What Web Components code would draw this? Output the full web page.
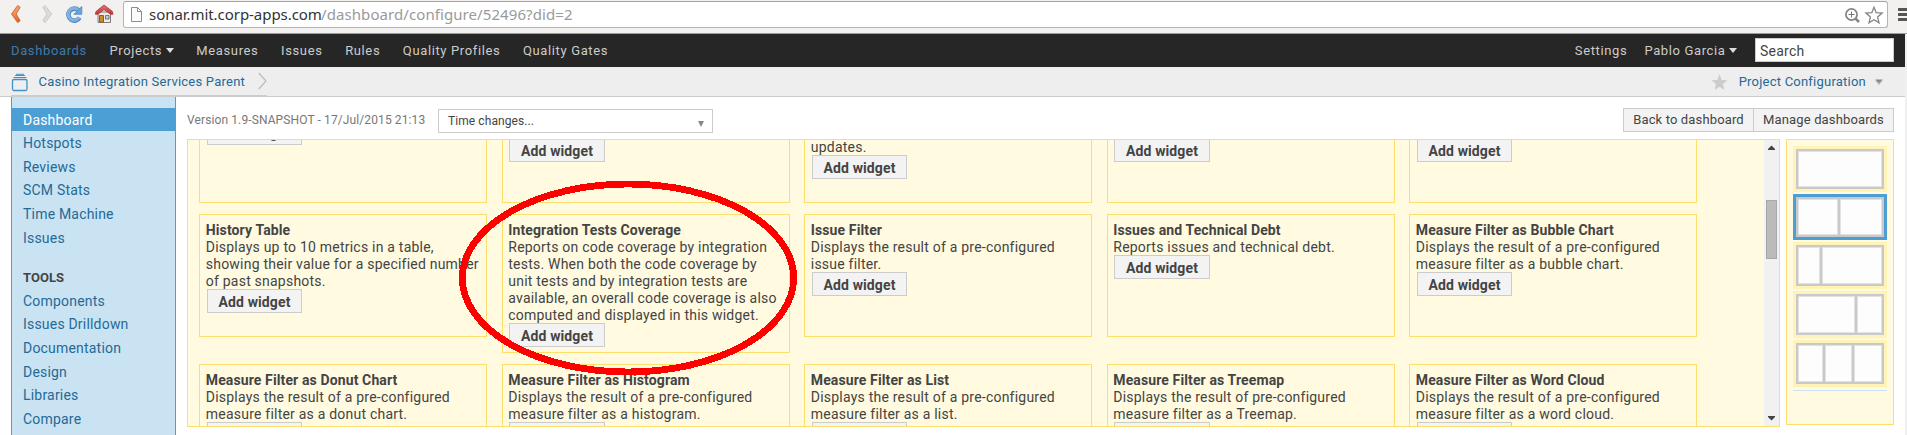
<!DOCTYPE html>
<html lang="en">
<head>
<meta charset="utf-8">
<title>Dashboard configuration</title>
<style>
html,body{margin:0;height:435px;overflow:hidden;background:#fff}
body{font-family:Roboto,"Liberation Sans",sans-serif;color:#444}
</style>
</head>
<body>
<sonar-app></sonar-app>
<script>
const define = (name, html, setup) => customElements.define(name, class extends HTMLElement {
  connectedCallback() {
    if (this.shadowRoot) return;
    const root = this.attachShadow({ mode: 'open' });
    const t = document.createElement('template');
    t.innerHTML = '<style>*{box-sizing:border-box}svg{display:block}</style>' + html;
    root.append(t.content.cloneNode(true));
    if (setup) setup(this, root);
  }
});

define('browser-toolbar', `
<style>
:host{display:flex;height:34px;box-sizing:border-box;background:#f2f1f0;border-bottom:1px solid #9a9e9a;align-items:flex-start;overflow:hidden}
.nav{width:123px;height:32px;flex:none}
.url{width:1765px;height:27px;margin-top:1px;border:1px solid #b4b4b2;border-top-color:#a2a6a2;border-radius:3px;background:#fff;display:flex;align-items:center;flex:none;font-family:"Noto Sans","Open Sans",sans-serif;font-size:15px;line-height:25px;white-space:pre}
.page{margin-left:6px;width:13px;margin-right:6px;flex:none}
.host{color:#333;letter-spacing:-.05px;width:172px;flex:none}
.path{color:#9a9a9a;letter-spacing:.08px;flex:1}
.tools{width:44px;flex:none}
.menu{width:9px;height:13px;margin:8px 0 0 10px;flex:none}
</style>
<svg class="nav" viewBox="0 0 123 32">
 <defs><linearGradient id="o" x1="0" y1="0" x2="0" y2="1"><stop offset="0" stop-color="#f0a070"/><stop offset=".5" stop-color="#f09050"/><stop offset="1" stop-color="#e0561c"/></linearGradient>
 <linearGradient id="r" x1="0" y1="0" x2="0" y2="1"><stop offset="0" stop-color="#e07a7a"/><stop offset="1" stop-color="#c03030"/></linearGradient></defs>
 <path d="M17.6 5.5 L20.2 7.3 L16.2 14 L20.2 20.8 L17.6 22.6 L11.5 14 Z" fill="url(#o)" stroke="#cf5a2a" stroke-width=".8" stroke-linejoin="round"/>
 <path d="M45.2 5.5 L42.8 7.3 L46.8 14 L42.8 20.8 L45.2 22.6 L51.8 14 Z" fill="#dbdad9" stroke="#c6c5c4" stroke-width=".8" stroke-linejoin="round"/>
 <path d="M78.5 10.2 A6 6 0 1 0 79.6 17.6" fill="none" stroke="#4f88c4" stroke-width="4.6"/>
 <path d="M81.8 6.5 V14.3 H73.8 Z" fill="#6fa3d8" stroke="#4f88c4" stroke-width=".8"/>
 <path d="M78 9.7 A6 6 0 1 0 79.2 17.4" fill="none" stroke="#82b1e2" stroke-width="3"/>
 <path d="M98 12 H110.500 V22.500 H98 Z" fill="#ecebe6" stroke="#807c78"/>
 <path d="M99.500 15.500 H103.500 V22 H99.500 Z" fill="#cf8a2a" stroke="#8a6020"/>
 <path d="M105.500 15.500 H109 V19 H105.500 Z" fill="#bcd" stroke="#777"/>
 <path d="M95.300 14.200 L96 11.500 L104 5 L112.500 11.500 L113 14.200 L110.500 14.200 L104 9.500 L98 14.200 Z" fill="url(#r)" stroke="#b44040" stroke-width=".9"/>
</svg>
<div class="url">
 <svg class="page" width="13" height="17" viewBox="0 0 13 17"><path d="M1.500 1.500 H7.500 L11.500 5.500 V15.500 H1.500 Z M7.500 1.500 V5.500 H11.500" fill="#fafafa" stroke="#8c8c8c"/></svg>
 <span class="host">sonar.mit.corp-apps.com</span><span class="path">/dashboard/configure/52496?did=2</span>
 <svg class="tools" width="44" height="20" viewBox="0 0 44 20"><g fill="none" stroke="#858585"><circle cx="8.500" cy="9.500" r="5.600" stroke-width="1.700"/><path d="M5.500 9.500H11.500M8.500 6.500V12.500" stroke="#777"/><path d="M12.600 13.600 L16 17" stroke-width="2.600"/><path d="M31 2.300 L33.200 7.700 L39.100 8.100 L34.600 11.900 L36 17.900 L31 14.700 L26 17.900 L27.400 11.900 L22.900 8.100 L28.800 7.700 Z" stroke-width="1.300"/></g></svg>
</div>
<svg class="menu" viewBox="0 0 9 13"><path d="M1 0H9V3H1A1 1 0 0 1 1 0M1 5H9V8H1A1 1 0 0 1 1 5M1 10H9V13H1A1 1 0 0 1 1 10" fill="#555"/></svg>
`);

define('main-nav', `
<style>
:host{display:flex;height:33px;background:#262626;color:#ccc;font-size:13px;letter-spacing:.63px;line-height:33px;white-space:nowrap;padding:0 11px}
a{margin-right:22.600px}
a.on{color:#3c7cae}
i{display:inline-block;border:4.500px solid transparent;border-top:5px solid #ddd;border-bottom:0;margin:0 0 2px 3.500px}
.gap{flex:1}
.user{margin-right:18px}
.search{width:139px;height:24px;margin-top:4px;border:1px solid #ccc;background:#fff;color:#444;font-size:14px;line-height:24px;padding-left:4px;letter-spacing:.25px}
</style>
<a class="on">Dashboards</a><a>Projects<i></i></a><a>Measures</a><a>Issues</a><a>Rules</a><a>Quality Profiles</a><a>Quality Gates</a>
<span class="gap"></span><a style="margin-right:17px">Settings</a><a class="user">Pablo Garcia<i></i></a><div class="search">Search</div>
`);

define('crumb-bar', `
<style>
:host{display:flex;height:30px;box-sizing:border-box;background:#eee;border-bottom:1px solid #ccc;color:#236a97;font-size:13px;letter-spacing:.225px;line-height:29px;padding:0 22px 0 11px;white-space:nowrap}
.crumb{width:256px;height:29px;border-bottom:1px solid #ccc;display:flex}
.crumb span{margin-left:9.500px;width:219.500px}
.gap{flex:1}
.conf{margin:0 9px 0 11px}
</style>
<div class="crumb"><svg width="18" height="28" viewBox="0 0 18 28"><g fill="none" stroke="#3f93cc"><rect x="1.500" y="12.500" width="14.500" height="11" rx="1.500" stroke-width="1.300"/><path d="M2.500 10.500H15.500M4 8.500H14" stroke-width="1.100"/><path d="M5 7.300H13" stroke-width="1"/></g></svg>
<span>Casino Integration Services Parent</span><svg width="9" height="28" viewBox="0 0 9 28"><path d="M.8 6 L8 14 L.8 22" fill="none" stroke="#bbb" stroke-width="1.200"/></svg></div>
<span class="gap"></span>
<svg width="17" height="29" viewBox="0 0 17 29"><path d="M8.500 7.500 L10.700 13 L16.500 13.300 L12 17 L13.500 23 L8.500 19.800 L3.500 23 L5 17 L.5 13.300 L6.300 13 Z" fill="#ccc"/></svg>
<span class="conf">Project Configuration</span>
<svg width="8" height="29" viewBox="0 0 8 29"><path d="M.5 12H7.500V14L4 18L.5 14Z" fill="#bbb"/><path d="M1 13H7L4 16Z" fill="#888"/></svg>
`);

define('side-item', `
<style>
:host{display:block;height:23.600px;line-height:25.600px;padding-left:11px;color:#236a97;font-size:14px;letter-spacing:.197px}
:host([selected]){background:#4b9fd5;color:#fff;height:23.200px}
:host([heading]){color:#444;font-weight:bold;font-size:13px;letter-spacing:.03px;margin-top:16px;height:23.600px;line-height:26px}
</style><slot></slot>`);

define('side-bar', `
<style>
:host{display:block;width:165px;flex:none;background:#cae3f2;border:solid #4b9fd5;border-width:0 1px;padding-top:11px;box-sizing:border-box}
</style>
<side-item selected>Dashboard</side-item><side-item>Hotspots</side-item><side-item>Reviews</side-item><side-item>SCM Stats</side-item><side-item>Time Machine</side-item><side-item>Issues</side-item>
<side-item heading>TOOLS</side-item><side-item>Components</side-item><side-item>Issues Drilldown</side-item><side-item>Documentation</side-item><side-item>Design</side-item><side-item>Libraries</side-item><side-item>Compare</side-item>
`);

define('action-bar', `
<style>
:host{display:flex;height:24px;font-size:12px;white-space:nowrap}
.ver{color:#777;line-height:24px;letter-spacing:.11px;width:251px}
.sel{width:275px;height:24px;margin-top:1px;border:1px solid #ccc;background:#fff;line-height:22px;padding:0 8px 0 9px;letter-spacing:.08px;display:flex;justify-content:space-between}
.sel i{border:3.500px solid transparent;border-top:6px solid #888;border-bottom:0;height:0;margin-top:11px}
.gap{flex:1}
b{font-weight:normal;font-size:13px;letter-spacing:.14px;background:#f3f3f3;border:1px solid #ccc;height:24px;line-height:22px;text-align:center}
b.l{width:130px;border-right:0}b.r{width:141px}
</style>
<span class="ver">Version 1.9-SNAPSHOT - 17/Jul/2015 21:13</span><div class="sel">Time changes...<i></i></div>
<span class="gap"></span><b class="l">Back to dashboard</b><b class="r">Manage dashboards</b>
`);

define('widget-card', `
<style>
:host{display:block;box-sizing:border-box;width:288px;border:1px solid #ffdf6b;padding:7px 5.600px 0;font-size:14px;line-height:17px;letter-spacing:.22px;white-space:nowrap}
h3{margin:0;font-size:14px;line-height:17px;letter-spacing:.12px}
h3:empty{display:none}
p{margin:0;white-space:pre-line}
.add{display:block;width:95.500px;height:24px;margin:-1px 0 0 1px;background:#f3f3f3;border:1px solid #ccc;font-weight:bold;text-align:center;line-height:24px;letter-spacing:.12px}
:host([scrolled]) .add{margin-top:-10px;line-height:22px}
</style><h3></h3><p><slot></slot></p><span class="add">Add widget</span>`,
(el, root) => {
  root.querySelector('h3').textContent = el.getAttribute('name') || '';
  // The label of a button below the fold is left out; only its top edge shows.
  if (el.hasAttribute('folded')) root.querySelector('.add').textContent = '';
});

define('widget-list', `
<style>
:host{display:flex;box-sizing:border-box;width:1593px;height:288px;border:1px solid #ffdf6b;background:#fffae0;overflow:hidden;justify-content:space-between}
.grid{display:grid;grid-template-columns:repeat(5,288px);column-gap:14.500px;row-gap:11px;grid-template-rows:74px 139px 123px;align-items:start;padding-left:11.200px;margin-top:-11px;height:297px}
.r1{height:74px}.r2,.r3{height:123px}
.r2.tall{height:139px}
.bar{width:15px;background:#f1f1f1;display:flex;flex-direction:column;align-items:center}
.thumb{width:11px;height:59px;background:#bbb;border:1px solid #a8a8a8;margin-top:44px}
.bar svg{flex:none}
</style>
<div class="grid"></div>
<div class="bar"><svg width="15" height="16" viewBox="0 0 15 16"><path d="M4 10V9L7.500 5.500L11 9V10Z" fill="#444"/></svg><div class="thumb"></div><span style="flex:1"></span><svg width="15" height="16" viewBox="0 0 15 16"><path d="M4 6V7L7.500 10.500L11 7V6Z" fill="#444"/></svg></div>
`, (el, root) => {
  const grid = root.querySelector('.grid');
  const add = (cls, name, text, attr, style) => {
    const c = document.createElement('widget-card');
    c.className = cls; if (name) c.setAttribute('name', name);
    if (attr) c.setAttribute(attr, '');
    c.textContent = text; if (style) c.style.cssText = style;
    grid.append(c);
  };
  // The list is scrolled: only the foot of each first-row card is in view.
  add('r1', '', '', 'scrolled', 'padding-top:1px');
  for (const t of ['', 'updates.', '', '']) add('r1', '', t, '', 'padding-top:9px');
  add('r2', 'History Table', 'Displays up to 10 metrics in a table,\nshowing their value for a specified number\nof past snapshots.');
  add('r2 tall', 'Integration Tests Coverage', 'Reports on code coverage by integration\ntests. When both the code coverage by\nunit tests and by integration tests are\navailable, an overall code coverage is also\ncomputed and displayed in this widget.');
  add('r2', 'Issue Filter', 'Displays the result of a pre-configured\nissue filter.');
  add('r2', 'Issues and Technical Debt', 'Reports issues and technical debt.');
  add('r2', 'Measure Filter as Bubble Chart', 'Displays the result of a pre-configured\nmeasure filter as a bubble chart.');
  add('r3', 'Measure Filter as Donut Chart', 'Displays the result of a pre-configured\nmeasure filter as a donut chart.', 'folded');
  add('r3', 'Measure Filter as Histogram', 'Displays the result of a pre-configured\nmeasure filter as a histogram.', 'folded');
  add('r3', 'Measure Filter as List', 'Displays the result of a pre-configured\nmeasure filter as a list.', 'folded');
  add('r3', 'Measure Filter as Treemap', 'Displays the result of pre-configured\nmeasure filter as a Treemap.', 'folded');
  add('r3', 'Measure Filter as Word Cloud', 'Displays the result of a pre-configured\nmeasure filter as a word cloud.', 'folded');
});

define('layout-thumb', `
<style>
:host{display:block;box-sizing:border-box;width:94px;height:47px;background:#fff3b8;padding:3px}
:host([short]){height:46px}
:host([selected]){background:#4b9fd5}
.f{display:flex;height:100%;gap:2px;background:#c9c9c9;border:2px solid #c9c9c9}
.f i{background:#fdfdfd;border:1px solid #e2e2e2}
</style><div class="f"></div>`, (el, root) => {
  for (const w of el.getAttribute('cols').split(' ')) {
    const i = document.createElement('i'); i.style.flex = w + ' 0 0'; root.querySelector('.f').append(i);
  }
});

define('layout-picker', `
<style>
:host{display:flex;flex-direction:column;gap:2px;box-sizing:border-box;width:108px;height:286px;border:1px solid #ffdf6b;background:#fffae0;padding:6px 0 0 6px}
hr{width:94px;height:1px;margin:1px 0 0;border:0;background:#cae3f2}
</style>
<layout-thumb short cols="1"></layout-thumb><layout-thumb short selected cols="40 42"></layout-thumb><layout-thumb cols="21.500 60.500"></layout-thumb><layout-thumb cols="58 24"></layout-thumb><layout-thumb cols="25 27 28"></layout-thumb><hr>
`);

define('sonar-app', `
<style>
:host{display:block;position:relative;width:1907px;height:435px;overflow:hidden}
.page{width:1905px;height:401px;background:#fff;display:flex;flex-direction:column}
.view{background:#f0f0f0}
.body{display:flex;flex:1;min-height:0;padding-left:11px}
main{margin-left:11px;padding-top:11px;width:1707px}
.cols{display:flex;gap:6px;margin-top:7px}
.mark{position:absolute;left:0;top:0;pointer-events:none}
</style>
<browser-toolbar></browser-toolbar>
<div class="view"><div class="page"><main-nav></main-nav><crumb-bar></crumb-bar>
<div class="body"><side-bar></side-bar><main><action-bar></action-bar><div class="cols"><widget-list></widget-list><layout-picker></layout-picker></div></main></div></div></div>
<svg class="mark" width="1907" height="435" viewBox="0 0 1907 435"><ellipse cx="628" cy="278" rx="165.700" ry="94" fill="none" stroke="#f00" stroke-width="6.800" shape-rendering="crispEdges"/></svg>
`);
</script>
</body>
</html>
